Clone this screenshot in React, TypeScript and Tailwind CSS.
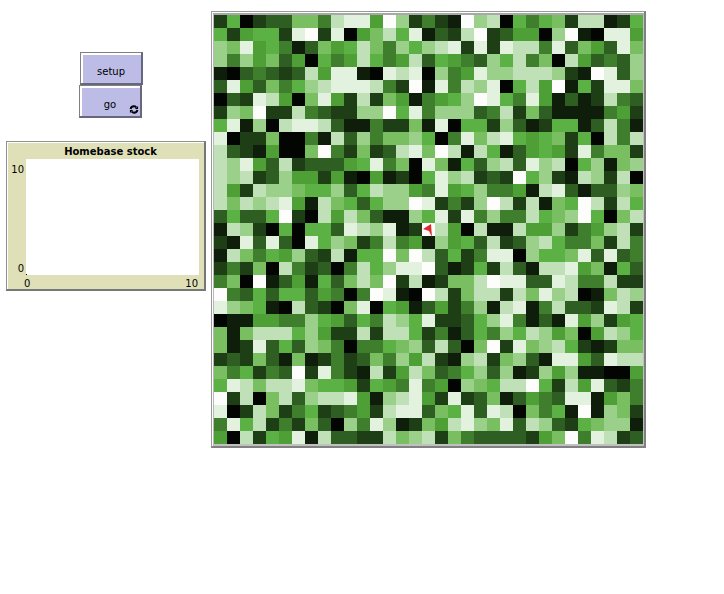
const shades: Record<string, string> = {
  '0': '#020502',
  '1': '#0f1e0b',
  '2': '#1e3f16',
  '3': '#2e5e22',
  '4': '#3f7e2c',
  '5': '#4f9f37',
  '6': '#5cb144',
  '7': '#79bf62',
  '8': '#9ad08a',
  '9': '#c0e1b7',
  a: '#e3f2de',
  b: '#fdfefc',
}

// one char per patch, dark to light
const patches = [
  '2602337749aa5b82421b8906467299126',
  '625662ab2a05796a1329b235508b10aa5',
  '87a564137569748689a2a2a994a3753a7',
  '848573506459645936543869470953438',
  '103432395aa10a9a0845a88999821ba38',
  '3a5374689aaa942b1a498a0695b162aa7',
  '032a9507a52927514568ba64a51312943',
  '287b229432288b6a48883492731111452',
  '6a1809aa931142271a066283126613941',
  'a022700419384778604a79a6567260949',
  '93215007b427239a7b9196135652a4772',
  '98a539233356a470a7163893a89068178',
  '98923855251051206a89232b682198290',
  '95298876683698854a56844519a313387',
  '97989a519763688ba2428b929176b9296',
  '36336b20959731186a2a48449678b6079',
  '1982060663a98a12b9509119558245892',
  '21a3a30a6872494518563923896447294',
  '1974658329166b7b93624aa08667a3a34',
  '24270942304968aab3126293199a57163',
  '470b135163797b2912779baa33a944922',
  'b43636635404ba10b92799297a8901798',
  'a8761093207a06513524819a149332a92',
  '0115544865364986a22368a4131a58256',
  '717999685229299624136486985705986',
  '712a36387404467839307b2a789621277',
  '23273171242374859218927831aa53a99',
  '746243b2a421925973468381285811005',
  '6a9799a76652654a45087699b6295a324',
  'b290793899a5189a52a23713543aa1574',
  'a0297246234529aa376a3a907461b1872',
  '4a6924273084a812759a87a3983267881',
  '509265a19332297892743333257b4a923',
]

function Button({ label, forever, className }: { label: string; forever?: boolean; className: string }) {
  return (
    <div className={`relative flex h-[33px] w-[63px] items-center justify-center border-t border-l border-r-2 border-b-2 border-t-[#808080] border-l-[#808080] border-r-[#66667c] border-b-[#66667c] bg-[#bcbce6] pt-[7px] text-[10px] text-black shadow-[inset_2px_2px_0_#fff] ${className}`}>
      <span>{label}</span>
      {forever && (
        <svg className="absolute right-[1px] bottom-[2px]" width="10" height="9" viewBox="0 0 10 10" fill="none">
          <path d="M1.200 4.500C1.600 2.600 3 1.500 5 1.500c1 0 1.800.4 2.500 1" stroke="#000" strokeWidth="2.200" />
          <path d="M8.800 5.500C8.400 7.400 7 8.500 5 8.500c-1 0-1.800-.4-2.500-1" stroke="#000" strokeWidth="2.200" />
          <path d="M6 4.500h3.500V1z" fill="#000" />
          <path d="M4 5.500H.5V9z" fill="#000" />
        </svg>
      )}
    </div>
  )
}

function Plot() {
  return (
    <div className="flex h-[150px] w-[200px] flex-col border-t border-l border-r-2 border-b-2 border-t-[#8f8f8f] border-l-[#8f8f8f] border-r-[#777] border-b-[#777] bg-[#e0e0b8] pt-[1px] pl-[1px] text-[10px] leading-none text-black shadow-[inset_1px_1px_0_#fff]">
      <div className="flex h-[16px] justify-center pt-[4px] pl-[9px] text-[10px] font-bold">Homebase stock</div>
      <div className="flex h-[116px]">
        <div className="flex w-[18px] flex-col justify-between pt-[6px] pr-[2px] pb-[1px] text-right">
          <span>10</span>
          <span>0</span>
        </div>
        <div className="relative w-[173px] bg-white">
          <div className="absolute bottom-0 left-0 h-px w-px bg-black" />
        </div>
      </div>
      <div className="flex w-[190px] justify-between pt-[4px] pl-[16px]">
        <span>0</span>
        <span>10</span>
      </div>
    </div>
  )
}

export default function App() {
  return (
    <div className="flex h-[594px] w-[724px] bg-white font-['DejaVu_Sans',sans-serif]">
      <div className="w-[206px] shrink-0 pt-[52px] pl-[6px]">
        <Button label="setup" className="ml-[74px]" />
        <Button label="go" forever className="ml-[73px]" />
        <div className="mt-[23px]">
          <Plot />
        </div>
      </div>
      <div className="ml-[5px] pt-[11px]">
        <div className="w-fit border-t border-l border-r-2 border-b-2 border-t-[#9a9a9a] border-l-[#9a9a9a] border-r-[#808080] border-b-[#808080] bg-white pt-px pl-px">
          <div className="border-t-2 border-l border-r border-b-2 border-t-[#a8a8a8] border-l-[#b8b8b8] border-r-[#c0c0c0] border-b-[#c0c0c0]">
            <div className="relative grid grid-cols-[repeat(33,13px)] grid-rows-[repeat(33,13px)]">
              {patches.flatMap((row, y) =>
                row.split('').map((s, x) => <div key={`${x}-${y}`} style={{ background: shades[s] }} />)
              )}
              <svg className="absolute top-[208px] left-[208px]" width="11" height="15" viewBox="0 0 11 15">
                <path d="M1 6 L9 1 L10 14 L7 8 z" fill="#e0282e" />
              </svg>
            </div>
          </div>
        </div>
      </div>
    </div>
  )
}
